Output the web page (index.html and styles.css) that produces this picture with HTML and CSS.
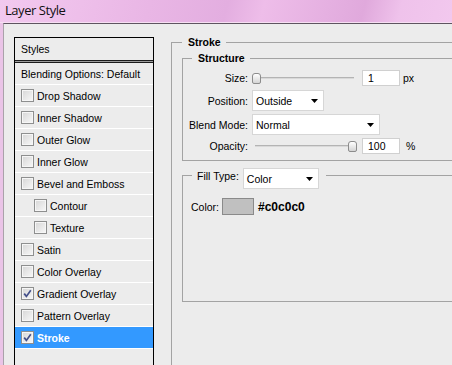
FILE: index.html
```html
<!DOCTYPE html>
<html>
<head>
<meta charset="utf-8">
<link rel="stylesheet" href="styles.css">
</head>
<body>
<div class="titlebar"><span class="title">Layer Style</span></div>
<div class="client">
  <div class="styles-panel">
    <div class="row head">Styles</div>
    <div class="sep"></div>
    <div class="row">Blending Options: Default</div>
    <div class="row"><span class="cb"></span>Drop Shadow</div>
    <div class="row"><span class="cb"></span>Inner Shadow</div>
    <div class="row"><span class="cb"></span>Outer Glow</div>
    <div class="row"><span class="cb"></span>Inner Glow</div>
    <div class="row"><span class="cb"></span>Bevel and Emboss</div>
    <div class="row sub"><span class="cb"></span>Contour</div>
    <div class="row sub"><span class="cb"></span>Texture</div>
    <div class="row"><span class="cb"></span>Satin</div>
    <div class="row"><span class="cb"></span>Color Overlay</div>
    <div class="row"><span class="cb checked"><svg width="11" height="11" viewBox="0 0 11 11"><path d="M2.2 5.6 L4.4 8.4 L8.8 2.2" fill="none" stroke="#44508a" stroke-width="1.7"/></svg></span>Gradient Overlay</div>
    <div class="row"><span class="cb"></span>Pattern Overlay</div>
    <div class="row active"><span class="cb checked"><svg width="11" height="11" viewBox="0 0 11 11"><path d="M2.2 5.6 L4.4 8.4 L8.8 2.2" fill="none" stroke="#44508a" stroke-width="1.7"/></svg></span>Stroke</div>
  </div>
  <div class="settings">
    <fieldset class="group stroke">
      <legend class="legend-stroke">Stroke</legend>
      <fieldset class="group structure">
        <legend class="legend-structure">Structure</legend>
        <div class="form">
          <div class="frow r-size">
            <span class="lbl">Size:</span>
            <div class="slider"><span class="thumb"></span></div>
            <span class="input">1</span>
            <span class="unit">px</span>
          </div>
          <div class="frow r-pos">
            <span class="lbl">Position:</span>
            <div class="select sel-pos"><span>Outside</span><svg width="7" height="4" viewBox="0 0 7 4"><polygon points="0,0 7,0 3.5,4" fill="#000"/></svg></div>
          </div>
          <div class="frow r-blend">
            <span class="lbl">Blend Mode:</span>
            <div class="select sel-blend"><span>Normal</span><svg width="7" height="4" viewBox="0 0 7 4"><polygon points="0,0 7,0 3.5,4" fill="#000"/></svg></div>
          </div>
          <div class="frow r-opacity">
            <span class="lbl">Opacity:</span>
            <div class="slider end"><span class="thumb"></span></div>
            <span class="input op">100</span>
            <span class="unit pct">%</span>
          </div>
        </div>
      </fieldset>
      <fieldset class="group fill">
        <legend class="legend-fill"><span class="ft">Fill Type:</span><div class="select sel-fill"><span>Color</span><svg width="7" height="4" viewBox="0 0 7 4"><polygon points="0,0 7,0 3.5,4" fill="#000"/></svg></div></legend>
        <div class="color-row">
          <span class="clbl">Color:</span>
          <span class="swatch"></span>
          <span class="hex">#c0c0c0</span>
        </div>
      </fieldset>
    </fieldset>
  </div>
</div>
</body>
</html>
```
FILE: styles.css
```css
* { box-sizing: border-box; }
html, body { margin: 0; padding: 0; }
body {
  width: 452px;
  height: 365px;
  overflow: hidden;
  background: #eac4e7;
  font-family: "Liberation Sans", Arial, sans-serif;
  font-size: 10.5px;
  color: #000;
}
.titlebar {
  height: 23px;
  padding-left: 5px;
  border-bottom: 1px solid #f6dff3;
  background: linear-gradient(105deg, #f2c9ef 0%, #eebfea 18%, #e9b6e5 33%, #e3aee0 50%, #eebde9 58%, #e5b0e1 72%, #e0a9dc 80%, #efc2eb 88%, #f2c8ee 100%);
}
.title {
  font-family: "Open Sans", sans-serif;
  font-size: 13px;
  line-height: 20px;
  color: #111;
  letter-spacing: -0.45px;
}
.client {
  margin-left: 3px;
  height: 342px;
  border-top: 1px solid #5e5460;
  border-left: 1px solid #aaa2aa;
  background: #ececec;
  display: grid;
  grid-template-columns: 140px 1fr;
  column-gap: 17px;
  align-items: start;
  padding-left: 10px;
}
.styles-panel {
  margin-top: 13px;
  height: 340px;
  border: 1px solid #000;
  border-bottom: none;
}
.row {
  height: 22px;
  display: flex;
  align-items: center;
  padding-left: 6px;
  border-bottom: 1px solid #fff;
  white-space: nowrap;
}
.row.head { border-bottom: none; }
.row.sub { padding-left: 19px; }
.sep {
  height: 3px;
  border-top: 1px solid #1c1c1c;
  border-bottom: 1px solid #1c1c1c;
  background: #9c9c9c;
}
.row.active {
  background: #3399ff;
  color: #fff;
  font-weight: bold;
}
.cb {
  width: 13px;
  height: 13px;
  flex: none;
  margin-right: 3px;
  border: 1px solid #8e8f8f;
  box-shadow: inset 0 0 0 1px #f6f6f6;
  background: linear-gradient(135deg, #d6d6d6, #f8f8f8);
  display: flex;
  align-items: center;
  justify-content: center;
}
.cb svg { display: block; }
.settings {
  margin-top: 11px;
  min-width: 0;
}
.group {
  margin: 0;
  border: 1px solid #a3a3a3;
  min-width: 0;
}
.group legend {
  line-height: 14px;
  font-weight: bold;
}
.stroke {
  width: 300px;
  height: 340px;
  padding: 0 10px;
}
.legend-stroke {
  margin-left: 0;
  padding: 0 5px 0 6px;
}
.structure {
  margin-top: 2px;
  padding: 0;
}
.legend-structure {
  margin-left: 9px;
  padding: 0 5px 0 6px;
}
.form {
  padding: 5px 0 6px 0;
}
.frow {
  display: flex;
  align-items: center;
}
.r-size { height: 16px; }
.r-pos { height: 21px; margin-top: 4px; }
.r-blend { height: 21px; margin-top: 3px; }
.r-opacity { height: 16px; margin-top: 3px; }
.lbl {
  width: 65px;
  text-align: right;
  margin-right: 4px;
  white-space: nowrap;
}
.slider {
  width: 102px;
  height: 16px;
  display: flex;
  align-items: center;
  background:
    linear-gradient(#b4b4b4, #b4b4b4) no-repeat left 0 top 7px / 100% 1px,
    linear-gradient(#d9d9d9, #d9d9d9) no-repeat left 0 top 8px / 100% 1px;
}
.slider.end {
  margin-left: 3px;
  justify-content: flex-end;
}
.thumb {
  width: 9px;
  height: 11px;
  border: 1px solid #8c8c8c;
  border-radius: 3px 3px 2px 2px;
  background: linear-gradient(#ffffff, #d4d4d4);
}
.input {
  width: 38px;
  height: 16px;
  margin-left: 8px;
  padding-left: 5px;
  background: #fff;
  border: 1px solid #d0d0d0;
  line-height: 14px;
}
.input.op { margin-left: 5px; }
.unit { margin-left: 3px; }
.unit.pct { margin-left: 6px; }
.select {
  height: 21px;
  display: flex;
  align-items: center;
  justify-content: space-between;
  padding: 0 5px 0 3px;
  background: #fff;
  border: 1px solid #d6d6d6;
  font-weight: normal;
}
.select svg { display: block; }
.sel-pos { width: 72px; }
.sel-blend { width: 128px; }
.fill {
  margin-top: 7px;
  padding: 0 0 86px 8px;
}
.legend-fill {
  margin-left: 1px;
  padding: 0 7px 0 5px;
  height: 14px;
  display: flex;
  align-items: flex-start;
  font-weight: normal !important;
}
.ft {
  padding-top: 1px;
  margin-right: 4px;
  font-weight: normal;
  white-space: nowrap;
}
.sel-fill {
  width: 76px;
  margin-bottom: -7px;
}
.color-row {
  margin-top: 16px;
  height: 17px;
  display: flex;
  align-items: center;
}
.clbl { margin-right: 3px; }
.swatch {
  width: 32px;
  height: 17px;
  background: #c0c0c0;
  border: 1px solid #8a8a8a;
}
.hex {
  margin-left: 4px;
  font-size: 12px;
  font-weight: bold;
}
```
